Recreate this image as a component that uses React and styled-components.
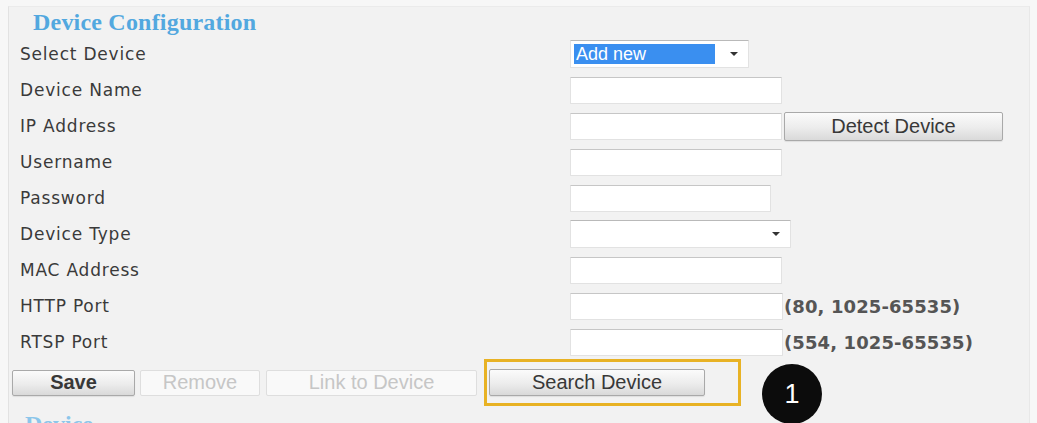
import React from "react";
import styled, { createGlobalStyle } from "styled-components";

const GlobalStyle = createGlobalStyle`
  html, body {
    margin: 0;
    padding: 0;
    background: #f7f7f7;
  }
  body {
    font-family: "DejaVu Sans", Verdana, sans-serif;
    overflow: hidden;
  }
`;

const Page = styled.div`
  width: 1037px;
  height: 423px;
  padding-top: 6px;
  box-sizing: border-box;
  overflow: hidden;
`;

const Panel = styled.section`
  margin: 0 7px 0 8px;
  background: #f2f2f2;
  border-left: 1px solid #e2e2e2;
  border-right: 1px solid #e8e8e8;
  border-top: 1px solid #ebebeb;
  height: 420px;
`;

const Title = styled.h2`
  margin: 0;
  height: 29px;
  padding-left: 24px;
  font-family: "Liberation Serif", "Times New Roman", serif;
  font-weight: bold;
  font-size: 24px;
  line-height: 30px;
  color: #52a8df;
  letter-spacing: 0.2px;
`;

const Row = styled.div`
  display: flex;
  align-items: center;
  height: 36px;
`;

const Label = styled.label`
  width: 550px;
  padding-left: 11px;
  flex: none;
  font-size: 17px;
  letter-spacing: 0.8px;
  color: #3a3a3a;
`;

const TextInput = styled.input`
  box-sizing: border-box;
  width: ${(p) => p.$w || 212}px;
  height: 27px;
  margin: 0;
  padding: 0 4px;
  background: #ffffff;
  border: 1px solid #e2e2e2;
  border-top-color: #c6c6c6;
  border-radius: 1px;
  outline: none;
  font-family: "Liberation Sans", Arial, sans-serif;
  font-size: 16px;
`;

const SelectBox = styled.div`
  box-sizing: border-box;
  width: ${(p) => p.$w}px;
  height: 28px;
  display: flex;
  align-items: center;
  padding: 0 10px 0 3px;
  background: #ffffff;
  border: 1px solid #e2e2e2;
  border-top-color: #b9b9b9;
  border-radius: 1px;
`;

const SelectValue = styled.span`
  flex: 1;
  height: 20px;
  font-family: "Liberation Sans", Arial, sans-serif;
  font-size: 18px;
  line-height: 20px;
  color: #ffffff;
  ${(p) =>
    p.$highlighted &&
    `
    background: #3a8ff0;
    margin-right: 15px;
    padding-left: 2px;
  `}
`;

const Caret = styled.span`
  width: 0;
  height: 0;
  border-left: 4px solid transparent;
  border-right: 4px solid transparent;
  border-top: 4px solid #333;
`;

const Button = styled.button`
  box-sizing: border-box;
  width: ${(p) => p.$w}px;
  height: ${(p) => p.$h || 26}px;
  margin: 0;
  padding: 0;
  font-family: "Liberation Sans", Arial, sans-serif;
  font-size: 20px;
  font-weight: ${(p) => (p.$bold ? "bold" : "normal")};
  color: #383838;
  background: linear-gradient(#fbfbfb 0%, #ececec 55%, #d9d9d9 100%);
  border: 1px solid #a9a9a9;
  border-radius: 2px;
  box-shadow: 0 1px 1px rgba(0, 0, 0, 0.08);

  &:disabled {
    color: #c6c6c6;
    background: #f9f9f9;
    border-color: #dedede;
    box-shadow: none;
  }
`;

const SideButton = styled(Button)`
  margin-left: 2px;
`;

const Hint = styled.span`
  margin-left: 1px;
  font-size: 18px;
  font-weight: bold;
  letter-spacing: 0.1px;
  color: #555555;
`;

const ActionBar = styled.div`
  display: flex;
  align-items: flex-start;
  height: 47px;
  padding: 0 0 0 3px;
  margin-top: -1px;
`;

const ActionGroup = styled.div`
  display: flex;
  align-items: center;
  height: 47px;
  gap: ${(p) => p.$gap || 0}px;
  margin-left: ${(p) => p.$offset || 0}px;
`;

const Highlight = styled.div`
  box-sizing: border-box;
  width: 257px;
  height: 47px;
  margin-left: 7px;
  display: flex;
  align-items: center;
  padding-left: 2px;
  border: 3px solid #e8b224;
`;

/* numbered callout; overhangs the bar below */
const StepBadge = styled.div`
  position: relative;
  z-index: 1;
  flex: none;
  width: 60px;
  height: 60px;
  margin: 5px 0 0 21px;
  border-radius: 50%;
  background: #0c0c0c;
  color: #ffffff;
  display: flex;
  align-items: center;
  justify-content: center;
  font-family: "Liberation Sans", Arial, sans-serif;
  font-size: 27px;
`;

const NextHeading = styled.div`
  margin-top: 3px;
  padding-left: 16px;
  font-family: "Liberation Serif", "Times New Roman", serif;
  font-weight: bold;
  font-size: 24px;
  line-height: 30px;
  color: #8cc6ea;
`;

const fields = [
  { label: "Select Device", control: "select-device" },
  { label: "Device Name", w: 212 },
  { label: "IP Address", w: 212, button: "Detect Device" },
  { label: "Username", w: 212 },
  { label: "Password", w: 201, type: "password" },
  { label: "Device Type", control: "select-type" },
  { label: "MAC Address", w: 212 },
  { label: "HTTP Port", w: 213, hint: "(80, 1025-65535)" },
  { label: "RTSP Port", w: 213, hint: "(554, 1025-65535)" },
];

function FieldControl({ field }) {
  if (field.control === "select-device") {
    return (
      <SelectBox $w={179}>
        <SelectValue $highlighted>Add new</SelectValue>
        <Caret />
      </SelectBox>
    );
  }
  if (field.control === "select-type") {
    return (
      <SelectBox $w={221}>
        <SelectValue />
        <Caret />
      </SelectBox>
    );
  }
  return <TextInput $w={field.w} type={field.type || "text"} />;
}

export default function App() {
  return (
    <>
      <GlobalStyle />
      <Page>
        <Panel>
          <Title>Device Configuration</Title>
          {fields.map((f) => (
            <Row key={f.label}>
              <Label>{f.label}</Label>
              <FieldControl field={f} />
              {f.button && (
                <SideButton $w={219} $h={29}>
                  {f.button}
                </SideButton>
              )}
              {f.hint && <Hint>{f.hint}</Hint>}
            </Row>
          ))}
          <ActionBar>
            <ActionGroup $gap={5}>
              <Button $w={123} $bold>
                Save
              </Button>
              <Button $w={120} disabled>
                Remove
              </Button>
            </ActionGroup>
            <ActionGroup $offset={6}>
              <Button $w={211} disabled>
                Link to Device
              </Button>
            </ActionGroup>
            <Highlight>
              <Button $w={216} $h={27}>
                Search Device
              </Button>
            </Highlight>
            <StepBadge>1</StepBadge>
          </ActionBar>
          <NextHeading>Device</NextHeading>
        </Panel>
      </Page>
    </>
  );
}
